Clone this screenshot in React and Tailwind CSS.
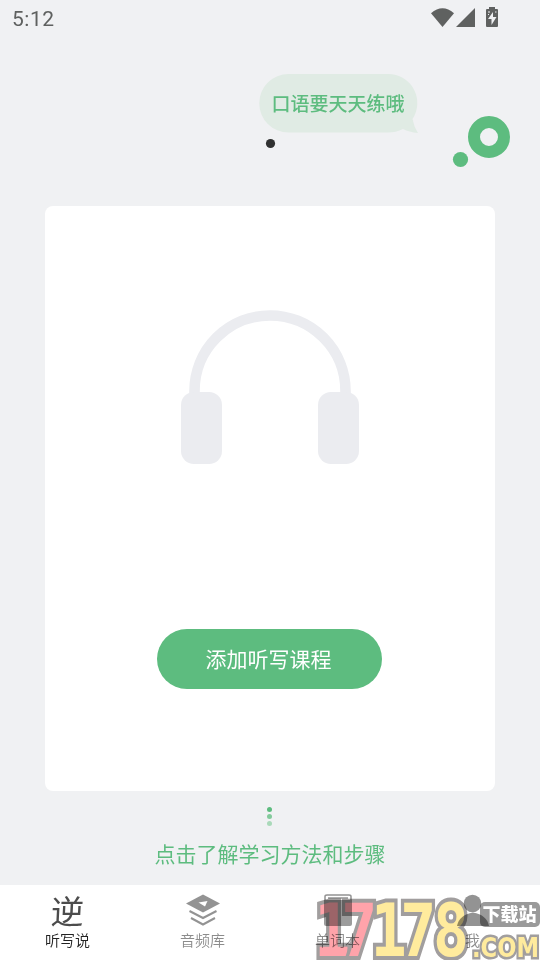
import React from "react";

const tabs = [
  { key: "dictation", label: "听写说", active: true },
  { key: "audio", label: "音频库" },
  { key: "words", label: "单词本" },
  { key: "me", label: "我" },
];

const StatusBar = () => (
  <div className="flex h-9 items-center justify-between pl-3 pr-[41px] text-[#5f6160]">
    <span className="pt-0.5 font-[Roboto] text-[21px] font-[450] leading-none tracking-[0.5px]">
      5:12
    </span>
    <svg width="68" height="22" viewBox="0 0 68 22" fill="currentColor">
      <path d="M0 6.2Q11.5-3.5 23 6.2L11.5 20Z" />
      <path d="M44 1V20H25Z" />
      <path d="M58 0h6v2h2q1 0 1 1v16q0 1-1 1H56q-1 0-1-1V3q0-1 1-1h2z" />
      <path d="M62 5l-5 7h3.500v6l5-8H62z" fill="#f0f1f3" />
      <path d="M57 5h2M57 7.500h1M64 5h1.500" stroke="#f0f1f3" />
    </svg>
  </div>
);

const Header = () => (
  <div className="h-[170px]">
    <svg width="540" height="170" viewBox="0 36 540 170">
      <path
        d="M288.500 74H388A29 29 0 0 1 412.500 119Q414 127 418 133Q409 132 403 129Q396 132.500 388 132.500H288.500A29.250 29.250 0 0 1 288.500 74Z"
        fill="#e0ebe4"
      />
      <text
        x="271.500"
        y="110.500"
        fontSize="19"
        fill="#5dbc7f"
        className="font-['Noto_Sans_CJK_SC',sans-serif] font-medium"
      >
        口语要天天练哦
      </text>
      <circle cx="270.500" cy="143.500" r="4.600" fill="#303131" />
      <circle cx="489" cy="137" r="15" fill="none" stroke="#5dbc7f" strokeWidth="12" />
      <circle cx="460.500" cy="159.500" r="7.600" fill="#5dbc7f" />
    </svg>
  </div>
);

const Headphones = () => (
  <svg width="180" height="156" viewBox="180 309 180 156" fill="#ebecf0">
    <path
      d="M194.500 398V391A75.500 75.500 0 0 1 345.500 391V398"
      fill="none"
      stroke="#ebecf0"
      strokeWidth="10.600"
    />
    <rect x="181" y="392" width="41" height="72" rx="13" />
    <rect x="318" y="392" width="41" height="72" rx="13" />
  </svg>
);

const TabIcon = ({ name }) => {
  if (name === "dictation") {
    return (
      <span className="block -skew-x-3 font-['Noto_Sans_CJK_SC',sans-serif] text-[33px] leading-[35px] text-[#4c4c4c]">
        逆
      </span>
    );
  }
  if (name === "audio") {
    return (
      <svg width="36" height="35" viewBox="0 0 36 35" fill="none" stroke="#939393" strokeWidth="2">
        <path d="M18 1.500L35 10.500L18 19.500L1 10.500Z" fill="#939393" stroke="none" />
        <path d="M13.500 9.500L22.500 8L20 13.500Z" fill="#fff" stroke="none" />
        <path d="M4.500 18L18 25L31.500 18M6 25L18 31.500L30 25" />
      </svg>
    );
  }
  if (name === "words") {
    return (
      <svg width="28" height="35" viewBox="0 0 28 35">
        <path d="M1 7V3.500Q1 2 3 2H25Q27 2 27 3.500V7" fill="none" stroke="#939393" strokeWidth="1.500" />
        <path d="M4 5H24" stroke="#939393" strokeWidth="1.500" />
        <path d="M0 7H28V31Q28 33 26 33H2Q0 33 0 31Z" fill="#9c9c9c" />
      </svg>
    );
  }
  return (
    <svg width="32" height="35" viewBox="0 0 32 35" fill="#939393">
      <circle cx="15.500" cy="10.500" r="8.800" />
      <path d="M0 33Q2 22 16 19.500Q30 22 32 33Z" />
    </svg>
  );
};

// Site stamp over the bottom right corner
const Watermark = () => (
  <svg
    className="pointer-events-none absolute bottom-0 right-0 mix-blend-multiply"
    width="228"
    height="64"
    viewBox="312 896 228 64"
  >
    <g
      className="font-['DejaVu_Sans_Mono',monospace] font-bold"
      fontSize="73"
      stroke="#a19e9e"
      strokeWidth="8"
      paintOrder="stroke"
      strokeLinejoin="miter"
      transform="translate(315 956) scale(0.82 1)"
    >
      <text x="-1 32" y="0" fill="#ffa3aa">
        17
      </text>
      <text x="68 104 144" y="0" fill="#ffeb9d">
        178
      </text>
    </g>
    <text
      x="472"
      y="957"
      fontSize="27"
      textLength="67"
      lengthAdjust="spacingAndGlyphs"
      fill="#ffeb9d"
      stroke="#a19e9e"
      strokeWidth="5"
      paintOrder="stroke"
      className="font-['DejaVu_Sans',sans-serif] font-bold"
    >
      .COM
    </text>
    <rect x="480" y="902" width="60" height="25" rx="5" fill="#9a9a9a" />
    <text
      x="482.500"
      y="921"
      fontSize="18"
      fill="#fff"
      className="font-['Noto_Sans_CJK_SC',sans-serif] font-black"
    >
      下载站
    </text>
  </svg>
);

const App = () => {
  return (
    <div className="relative flex h-[960px] w-[540px] flex-col overflow-hidden bg-[#f0f1f3] font-['Noto_Sans_CJK_SC',sans-serif]">
      <StatusBar />
      <Header />

      {/* Course card */}
      <div className="mx-[45px] flex h-[585px] flex-col items-center rounded-lg bg-white pt-[103px]">
        <Headphones />
        <button className="mr-px mt-[164px] h-[60px] w-[225px] rounded-full bg-[#5dbc7f] pr-0.5 text-[21px] font-normal text-white">
          添加听写课程
        </button>
      </div>

      <div className="flex h-[94px] flex-col items-center pt-4">
        <div className="mr-0.5 flex flex-col gap-[2px]">
          <span className="size-[5px] rounded-full bg-[#5dbc7f]" />
          <span className="size-[5px] rounded-full bg-[#82ca9b]" />
          <span className="size-[5px] rounded-full bg-[#a9d9b9]" />
        </div>
        <p className="mt-[11px] text-[21px] font-normal leading-[32px] text-[#5dbc7f]">
          点击了解学习方法和步骤
        </p>
      </div>

      {/* Tab bar */}
      <div className="grid h-[75px] grid-cols-4 bg-white pt-2">
        {tabs.map((tab) => (
          <div key={tab.key} className="flex flex-col items-center">
            <TabIcon name={tab.key} />
            <span
              className={`mt-px text-[15px] font-[350] leading-[22px] ${
                tab.active ? "text-[#222]" : "text-[#8c8c8c]"
              }`}
            >
              {tab.label}
            </span>
          </div>
        ))}
      </div>

      <Watermark />
    </div>
  );
};

export default App;
